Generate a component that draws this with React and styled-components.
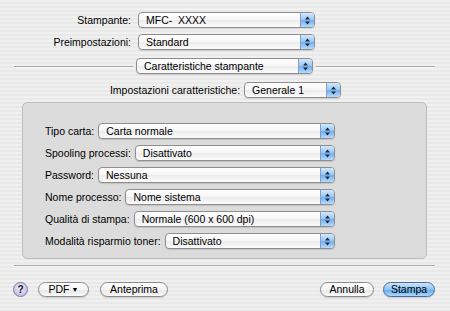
import React from "react";
import styled, { createGlobalStyle } from "styled-components";

const GlobalStyle = createGlobalStyle`
  html, body {
    margin: 0;
    padding: 0;
  }
  body {
    font-family: "Liberation Sans", Arial, sans-serif;
    font-size: 10.5px;
    color: #000;
    background: #ededed;
  }
`;

const Sheet = styled.div`
  width: 450px;
  height: 311px;
  box-sizing: border-box;
  padding-top: 12px;
  overflow: hidden;
  background: repeating-linear-gradient(
    to bottom,
    #f0f0f0 0px,
    #f0f0f0 2px,
    #e9e9e9 2px,
    #e9e9e9 4px
  );
`;

const TopForm = styled.div`
  display: grid;
  grid-template-columns: 131px 177px;
  column-gap: 7px;
  row-gap: 6px;
  align-items: center;
`;

const Label = styled.span`
  text-align: ${(p) => (p.$right ? "right" : "left")};
  white-space: nowrap;
  line-height: 16px;
`;

const Popup = styled.div`
  display: flex;
  height: 16px;
  box-sizing: border-box;
  width: ${(p) => (p.$w ? `${p.$w}px` : "auto")};
  flex: ${(p) => (p.$grow ? "1" : "none")};
  border: 1px solid #8e8e8e;
  border-radius: 4px;
  background: linear-gradient(#ffffff, #f6f6f6 50%, #ebebeb 51%, #fbfbfb);
  box-shadow: 0 1px 1px rgba(0, 0, 0, 0.12);
  overflow: hidden;
`;

const PopupText = styled.span`
  flex: 1;
  padding-left: 7px;
  line-height: 14px;
  white-space: pre;
`;

const PopupArrows = styled.span`
  width: 13px;
  border-left: 1px solid #7f9fc9;
  background: linear-gradient(#d2e8fc, #98c6f3 50%, #72adec 51%, #b4dbfc);
  display: flex;
  align-items: center;
  justify-content: center;
`;

function Arrows() {
  return (
    <svg width="5" height="9" viewBox="0 0 5 9">
      <path d="M2.5 0.5 L5 3.5 L0 3.5 Z" fill="#1c2a44" />
      <path d="M0 5.5 L5 5.5 L2.5 8.5 Z" fill="#1c2a44" />
    </svg>
  );
}

function PopupButton({ value, w, grow }) {
  return (
    <Popup $w={w} $grow={grow}>
      <PopupText>{value}</PopupText>
      <PopupArrows>
        <Arrows />
      </PopupArrows>
    </Popup>
  );
}

const SectionRow = styled.div`
  display: flex;
  align-items: center;
  margin-top: 8px;
  padding: 0 15px 0 14px;
`;

const Line = styled.div`
  flex: 1;
  height: 1px;
  background: #a9a9a9;
  box-shadow: 0 1px 0 #fafafa;
  margin: ${(p) => p.$margin || "0"};
`;

const FeatureRow = styled.div`
  display: flex;
  justify-content: center;
  align-items: center;
  gap: 4px;
  margin-top: 8px;
  padding-left: 1px;
`;

const GroupBox = styled.div`
  margin: 4px 23px 0 22px;
  height: 157px;
  box-sizing: border-box;
  padding: 20px 91px 0 22px;
  background: #dcdcdc;
  border: 1px solid #bdbdbd;
  border-radius: 5px;
  display: flex;
  flex-direction: column;
  gap: 6px;
`;

const FieldRow = styled.div`
  display: flex;
  align-items: center;
  gap: 4px;
`;

const Divider = styled.div`
  margin: 6px 15px 0 14px;
  height: 1px;
  background: #a9a9a9;
  box-shadow: 0 1px 0 #fafafa;
`;

const ButtonBar = styled.div`
  display: flex;
  align-items: center;
  margin-top: 16px;
  padding: 0 15px 0 13px;
`;

const HelpButton = styled.div`
  width: 15px;
  height: 15px;
  box-sizing: border-box;
  border-radius: 50%;
  border: 1px solid #7c7896;
  background: radial-gradient(circle at 50% 35%, #f1edff, #cfc6ee 60%, #b8acdf);
  font-weight: bold;
  font-size: 10px;
  line-height: 13px;
  text-align: center;
  color: #111;
  margin-right: 10px;
`;

const Pill = styled.div`
  width: ${(p) => p.$w}px;
  height: 15px;
  box-sizing: border-box;
  border-radius: 8px;
  border: 1px solid ${(p) => (p.$primary ? "#4a6f9f" : "#8a8a8a")};
  background: ${(p) =>
    p.$primary
      ? "linear-gradient(#cbe6fd, #8cc2f3 50%, #62a8ee 51%, #a9dafd)"
      : "linear-gradient(#ffffff, #f4f4f4 50%, #e6e6e6 51%, #fafafa)"};
  box-shadow: 0 1px 1px rgba(0, 0, 0, 0.15);
  text-align: center;
  line-height: 13px;
  margin-right: ${(p) => p.$mr || 0}px;
  white-space: nowrap;
`;

const Caret = styled.span`
  font-size: 7px;
  vertical-align: 1px;
  margin-left: 2px;
`;

const Spacer = styled.div`
  flex: 1;
`;

const fields = [
  ["Tipo carta:", "Carta normale"],
  ["Spooling processi:", "Disattivato"],
  ["Password:", "Nessuna"],
  ["Nome processo:", "Nome sistema"],
  ["Qualità di stampa:", "Normale (600 x 600 dpi)"],
  ["Modalità risparmio toner:", "Disattivato"],
];

export default function App() {
  return (
    <>
      <GlobalStyle />
      <Sheet>
        <TopForm>
          <Label $right>Stampante:</Label>
          <PopupButton value="MFC-  XXXX" />
          <Label $right>Preimpostazioni:</Label>
          <PopupButton value="Standard" />
        </TopForm>

        <SectionRow>
          <Line $margin="0 3px 0 0" />
          <PopupButton value="Caratteristiche stampante" w={177} />
          <Line $margin="0 0 0 3px" />
        </SectionRow>

        <FeatureRow>
          <Label>Impostazioni caratteristiche:</Label>
          <PopupButton value="Generale 1" w={97} />
        </FeatureRow>

        <GroupBox>
          {fields.map(([label, value]) => (
            <FieldRow key={label}>
              <Label>{label}</Label>
              <PopupButton value={value} grow />
            </FieldRow>
          ))}
        </GroupBox>

        <Divider />

        <ButtonBar>
          <HelpButton>?</HelpButton>
          <Pill $w={51} $mr={11}>
            PDF<Caret>▼</Caret>
          </Pill>
          <Pill $w={68}>Anteprima</Pill>
          <Spacer />
          <Pill $w={54} $mr={9}>Annulla</Pill>
          <Pill $w={52} $primary>Stampa</Pill>
        </ButtonBar>
      </Sheet>
    </>
  );
}
